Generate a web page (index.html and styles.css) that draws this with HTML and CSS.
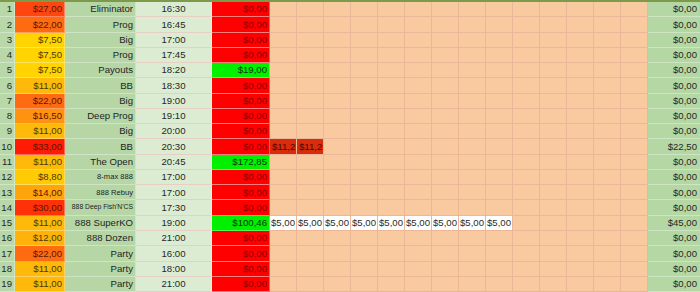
FILE: index.html
```html
<!DOCTYPE html>
<html>
<head>
<meta charset="utf-8">
<link rel="stylesheet" href="styles.css">
</head>
<body>
<div class="sheet">
  <div class="row"><span class="n">1</span><span class="p dk" style="background:#ff4610">$27,00</span><span class="nm">Eliminator</span><span class="t">16:30</span><span class="r">$0,00</span><span class="pad"></span><span class="tot">$0,00</span></div>
  <div class="row"><span class="n">2</span><span class="p dk" style="background:#ff6b10">$22,00</span><span class="nm">Prog</span><span class="t">16:45</span><span class="r">$0,00</span><span class="pad"></span><span class="tot">$0,00</span></div>
  <div class="row"><span class="n">3</span><span class="p yl" style="background:#ffd400">$7,50</span><span class="nm">Big</span><span class="t">17:00</span><span class="r">$0,00</span><span class="pad"></span><span class="tot">$0,00</span></div>
  <div class="row"><span class="n">4</span><span class="p yl" style="background:#ffd400">$7,50</span><span class="nm">Prog</span><span class="t">17:45</span><span class="r">$0,00</span><span class="pad"></span><span class="tot">$0,00</span></div>
  <div class="row"><span class="n">5</span><span class="p yl" style="background:#ffd400">$7,50</span><span class="nm">Payouts</span><span class="t">18:20</span><span class="g">$19,00</span><span class="pad"></span><span class="tot">$0,00</span></div>
  <div class="row"><span class="n">6</span><span class="p yl" style="background:#ffb90a">$11,00</span><span class="nm">BB</span><span class="t">18:30</span><span class="r">$0,00</span><span class="pad"></span><span class="tot">$0,00</span></div>
  <div class="row"><span class="n">7</span><span class="p dk" style="background:#ff6b10">$22,00</span><span class="nm">Big</span><span class="t">19:00</span><span class="r">$0,00</span><span class="pad"></span><span class="tot">$0,00</span></div>
  <div class="row"><span class="n">8</span><span class="p dk" style="background:#ff9310">$16,50</span><span class="nm">Deep Prog</span><span class="t">19:10</span><span class="r">$0,00</span><span class="pad"></span><span class="tot">$0,00</span></div>
  <div class="row"><span class="n">9</span><span class="p yl" style="background:#ffb90a">$11,00</span><span class="nm">Big</span><span class="t">20:00</span><span class="r">$0,00</span><span class="pad"></span><span class="tot">$0,00</span></div>
  <div class="row"><span class="n">10</span><span class="p dk" style="background:#ff1b04">$33,00</span><span class="nm">BB</span><span class="t">20:30</span><span class="r">$0,00</span><span class="pad"><span class="x">$11,2</span><span class="x">$11,2</span></span><span class="tot">$22,50</span></div>
  <div class="row"><span class="n">11</span><span class="p yl" style="background:#ffb90a">$11,00</span><span class="nm">The Open</span><span class="t">20:45</span><span class="g">$172,85</span><span class="pad"></span><span class="tot">$0,00</span></div>
  <div class="row"><span class="n">12</span><span class="p yl" style="background:#ffcb04">$8,80</span><span class="nm sm">8-max 888</span><span class="t">17:00</span><span class="r">$0,00</span><span class="pad"></span><span class="tot">$0,00</span></div>
  <div class="row"><span class="n">13</span><span class="p dk" style="background:#ffa50c">$14,00</span><span class="nm sm">888 Rebuy</span><span class="t">17:00</span><span class="r">$0,00</span><span class="pad"></span><span class="tot">$0,00</span></div>
  <div class="row"><span class="n">14</span><span class="p dk" style="background:#ff3108">$30,00</span><span class="nm xs">888 Deep Fish'N'CS</span><span class="t">17:30</span><span class="r">$0,00</span><span class="pad"></span><span class="tot">$0,00</span></div>
  <div class="row"><span class="n">15</span><span class="p yl" style="background:#ffb90a">$11,00</span><span class="nm">888 SuperKO</span><span class="t">19:00</span><span class="g">$100,46</span><span class="pad"><span class="w">$5,00</span><span class="w">$5,00</span><span class="w">$5,00</span><span class="w">$5,00</span><span class="w">$5,00</span><span class="w">$5,00</span><span class="w">$5,00</span><span class="w">$5,00</span><span class="w">$5,00</span></span><span class="tot">$45,00</span></div>
  <div class="row"><span class="n">16</span><span class="p yl" style="background:#ffb30a">$12,00</span><span class="nm">888 Dozen</span><span class="t">21:00</span><span class="r">$0,00</span><span class="pad"></span><span class="tot">$0,00</span></div>
  <div class="row"><span class="n">17</span><span class="p dk" style="background:#ff6b10">$22,00</span><span class="nm">Party</span><span class="t">16:00</span><span class="r">$0,00</span><span class="pad"></span><span class="tot">$0,00</span></div>
  <div class="row"><span class="n">18</span><span class="p yl" style="background:#ffb90a">$11,00</span><span class="nm">Party</span><span class="t">18:00</span><span class="r">$0,00</span><span class="pad"></span><span class="tot">$0,00</span></div>
  <div class="row"><span class="n">19</span><span class="p yl" style="background:#ffb90a">$11,00</span><span class="nm">Party</span><span class="t">21:00</span><span class="r">$0,00</span><span class="pad"></span><span class="tot">$0,00</span></div>
</div>
</body>
</html>
```

FILE: styles.css
```css
html, body {
  margin: 0;
  padding: 0;
  background: #f9c9a0;
}
.sheet {
  width: 700px;
  height: 292px;
  border-top: 2px solid #7c9a4a;
  box-sizing: border-box;
  display: flex;
  flex-direction: column;
  font-family: "Liberation Sans", Arial, sans-serif;
  font-size: 9.6px;
  color: #2a2a2a;
  overflow: hidden;
}
.row {
  flex: 1;
  display: grid;
  grid-template-columns: 15px 50px 71px 76px 58px 378px 52px;
  min-height: 0;
}
.row > span {
  box-sizing: border-box;
  display: flex;
  align-items: center;
  border-bottom: 1px solid rgba(255, 255, 255, 0.35);
  border-right: 1px solid rgba(255, 255, 255, 0.35);
  white-space: nowrap;
  overflow: hidden;
  line-height: 1;
}
.n {
  background: #b9d8a9;
  justify-content: flex-end;
  padding-right: 2px;
  color: #262626;
}
.p {
  justify-content: flex-end;
  padding-right: 2px;
}
.p.dk { color: #5e1600; }
.p.yl { color: #4e3a00; }
.nm {
  background: #b6d6a6;
  justify-content: flex-end;
  padding-right: 2px;
  color: #242424;
}
.nm.sm { font-size: 7.6px; }
.nm.xs { font-size: 6.8px; }
.t {
  background: #dbecd3;
  justify-content: center;
  color: #262626;
  border-bottom-color: #e6cfc4 !important;
}
.r {
  background: #ff0000;
  color: #8e0000;
  justify-content: flex-end;
  padding-right: 2px;
  border-bottom-color: #ff7d7d !important;
}
.g {
  background: #00f000;
  color: #083208;
  justify-content: flex-end;
  padding-right: 2px;
}
.row > .pad {
  background-color: #f9c9a0;
  background-image: repeating-linear-gradient(to right, transparent 0 26px, #ebb797 26px 27px);
  border-right: none;
  border-bottom: 1px solid #ebb797;
  display: grid;
  grid-template-columns: repeat(14, 27px);
  align-items: stretch;
}
.pad > span {
  display: flex;
  align-items: center;
  overflow: hidden;
  white-space: nowrap;
  margin-right: 1px;
}
.x {
  background: #d92c0c;
  color: #520600;
  padding-left: 2px;
}
.w {
  background: #ffffff;
  color: #2a2a2a;
  justify-content: flex-end;
  padding-right: 1px;
}
.tot {
  background: #b4d7a4;
  justify-content: flex-end;
  padding-right: 3px;
  color: #262626;
  border-right: none !important;
}
```
